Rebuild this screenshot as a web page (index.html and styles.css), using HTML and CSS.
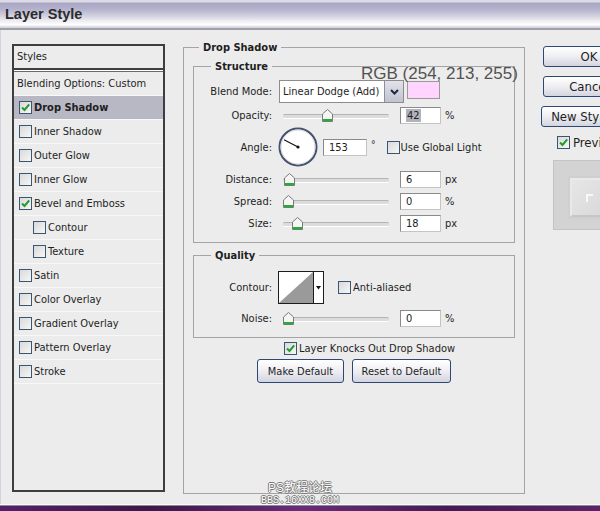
FILE: index.html
```html
<!DOCTYPE html>
<html>
<head>
<meta charset="utf-8">
<title>Layer Style</title>
<link rel="stylesheet" href="styles.css">
</head>
<body>
<div class="window">
  <header class="titlebar"><span class="title">Layer Style</span></header>

  <div class="main">
    <aside class="stylelist">
      <div class="styles-hdr">Styles</div>
      <div class="hdr-sep"></div>
      <div class="item plain">Blending Options: Custom</div>
      <div class="item sel"><span class="cb"><svg viewBox="0 0 11 11" width="11" height="11"><path d="M2 5.5 L4.5 8 L9.2 2.3" fill="none" stroke="#1f9b2a" stroke-width="2"/></svg></span><b>Drop Shadow</b></div>
      <div class="item"><span class="cb"></span>Inner Shadow</div>
      <div class="item"><span class="cb"></span>Outer Glow</div>
      <div class="item"><span class="cb"></span>Inner Glow</div>
      <div class="item"><span class="cb"><svg viewBox="0 0 11 11" width="11" height="11"><path d="M2 5.5 L4.5 8 L9.2 2.3" fill="none" stroke="#1f9b2a" stroke-width="2"/></svg></span>Bevel and Emboss</div>
      <div class="item sub"><span class="cb"></span>Contour</div>
      <div class="item sub"><span class="cb"></span>Texture</div>
      <div class="item"><span class="cb"></span>Satin</div>
      <div class="item"><span class="cb"></span>Color Overlay</div>
      <div class="item"><span class="cb"></span>Gradient Overlay</div>
      <div class="item"><span class="cb"></span>Pattern Overlay</div>
      <div class="item"><span class="cb"></span>Stroke</div>
    </aside>

    <section class="panel">
      <fieldset class="grp outer">
        <legend>Drop Shadow</legend>

        <fieldset class="grp structure">
          <legend>Structure</legend>
          <div class="rows srows">
            <div class="row blend">
              <span class="lbl">Blend Mode:</span>
              <div class="select">
                <span class="sel-text">Linear Dodge (Add)</span>
                <span class="sel-btn"><svg viewBox="0 0 9 6" width="9" height="6"><path d="M1 1 L4.5 4.5 L8 1" fill="none" stroke="#1b2846" stroke-width="2"/></svg></span>
              </div>
              <span class="swatch"></span>
            </div>

            <div class="row srow r-opacity">
              <span class="lbl">Opacity:</span>
              <div class="slider"><span class="thumb" style="left:39px"><svg viewBox="0 0 11 13" width="11" height="13"><path d="M0.5 5 L5.5 0.5 L10.5 5 V12.5 H0.5 Z" fill="#f5f5f5" stroke="#7a7a7a"/><rect x="1" y="10" width="9" height="2.5" fill="#2ea83a"/></svg></span></div>
              <span class="num"><span class="hl">42</span></span>
              <span class="unit">%</span>
            </div>

            <div class="row angle">
              <span class="lbl">Angle:</span>
              <svg class="dial" viewBox="0 0 40 40" width="40" height="40">
                <circle cx="20" cy="20" r="18.5" fill="#fff" stroke="#45526e" stroke-width="2"/>
                <circle cx="20" cy="20" r="17" fill="none" stroke="#d6d6de" stroke-width="1"/>
                <line x1="20" y1="20" x2="6" y2="12.8" stroke="#111" stroke-width="1.2"/>
                <circle cx="20" cy="20" r="1.6" fill="#111"/>
              </svg>
              <span class="num ang">153</span>
              <span class="deg">°</span>
              <span class="cb glob"></span>
              <span class="cbtext">Use Global Light</span>
            </div>

            <div class="row srow r-dist">
              <span class="lbl">Distance:</span>
              <div class="slider"><span class="thumb" style="left:1px"><svg viewBox="0 0 11 13" width="11" height="13"><path d="M0.5 5 L5.5 0.5 L10.5 5 V12.5 H0.5 Z" fill="#f5f5f5" stroke="#7a7a7a"/><rect x="1" y="10" width="9" height="2.5" fill="#2ea83a"/></svg></span></div>
              <span class="num">6</span>
              <span class="unit">px</span>
            </div>

            <div class="row srow r-spread">
              <span class="lbl">Spread:</span>
              <div class="slider"><span class="thumb" style="left:0px"><svg viewBox="0 0 11 13" width="11" height="13"><path d="M0.5 5 L5.5 0.5 L10.5 5 V12.5 H0.5 Z" fill="#f5f5f5" stroke="#7a7a7a"/><rect x="1" y="10" width="9" height="2.5" fill="#2ea83a"/></svg></span></div>
              <span class="num">0</span>
              <span class="unit">%</span>
            </div>

            <div class="row srow r-size">
              <span class="lbl">Size:</span>
              <div class="slider"><span class="thumb" style="left:9px"><svg viewBox="0 0 11 13" width="11" height="13"><path d="M0.5 5 L5.5 0.5 L10.5 5 V12.5 H0.5 Z" fill="#f5f5f5" stroke="#7a7a7a"/><rect x="1" y="10" width="9" height="2.5" fill="#2ea83a"/></svg></span></div>
              <span class="num">18</span>
              <span class="unit">px</span>
            </div>
          </div>
        </fieldset>

        <fieldset class="grp quality">
          <legend>Quality</legend>
          <div class="rows qrows">
            <div class="row contour-row">
              <span class="lbl">Contour:</span>
              <div class="contour">
                <svg viewBox="0 0 34 31" width="34" height="31" class="curve"><rect width="34" height="31" fill="#fff"/><path d="M0 31 L34 0 L34 31 Z" fill="#9a9a9a"/></svg>
                <span class="c-btn"><svg viewBox="0 0 5 4" width="5" height="4"><path d="M0 0 H5 L2.5 3.5 Z" fill="#111"/></svg></span>
              </div>
              <span class="cb anti"></span>
              <span class="cbtext">Anti-aliased</span>
            </div>
            <div class="row srow r-noise">
              <span class="lbl">Noise:</span>
              <div class="slider"><span class="thumb" style="left:0px"><svg viewBox="0 0 11 13" width="11" height="13"><path d="M0.5 5 L5.5 0.5 L10.5 5 V12.5 H0.5 Z" fill="#f5f5f5" stroke="#7a7a7a"/><rect x="1" y="10" width="9" height="2.5" fill="#2ea83a"/></svg></span></div>
              <span class="num">0</span>
              <span class="unit">%</span>
            </div>
          </div>
        </fieldset>

        <div class="knock"><span class="cb"><svg viewBox="0 0 11 11" width="11" height="11"><path d="M2 5.5 L4.5 8 L9.2 2.3" fill="none" stroke="#1f9b2a" stroke-width="2"/></svg></span><span class="cbtext">Layer Knocks Out Drop Shadow</span></div>

        <div class="defaults">
          <div class="btn mk">Make Default</div>
          <div class="btn rs">Reset to Default</div>
        </div>
      </fieldset>
    </section>

    <aside class="side">
      <div class="btn big">OK</div>
      <div class="btn big">Cancel</div>
      <div class="btn big newstyle">New Style...</div>
      <div class="pv-check"><span class="cb"><svg viewBox="0 0 11 11" width="11" height="11"><path d="M2 5.5 L4.5 8 L9.2 2.3" fill="none" stroke="#1f9b2a" stroke-width="2"/></svg></span><span class="pv-text">Preview</span></div>
      <div class="preview">
        <div class="pv-inner"><svg viewBox="0 0 10 10" width="10" height="10"><path d="M2 9 V2 H8" fill="none" stroke="#ffffff" stroke-width="1.6"/></svg></div>
      </div>
    </aside>
  </div>

  <div class="bottom"></div>

  <div class="rgb-note">RGB (254, 213, 255)</div>
  <div class="watermark">
    <span class="wm1">PS教程论坛</span>
    <span class="wm2">BBS.16XX8.COM</span>
  </div>
</div>
</body>
</html>
```

FILE: styles.css
```css
* { box-sizing: border-box; }
html, body { margin: 0; padding: 0; }
body {
  width: 600px;
  height: 511px;
  overflow: hidden;
  background: #ececec;
  font-family: "DejaVu Sans Condensed", "Liberation Sans", sans-serif;
  font-size: 11px;
  color: #1e1e1e;
}
.window {
  position: relative;
  display: grid;
  grid-template-rows: 30px 474px 7px;
  height: 511px;
  box-shadow: inset 1px 0 0 #d4d3e0;
}

/* title bar */
.titlebar {
  display: flex;
  align-items: center;
  padding-left: 5px;
  background: linear-gradient(to bottom, #dcdbe5 0, #dcdbe5 2px, #a8a6c4 3px, #b3b1cc 9px, #d2d1df 16px, #eeeef3 21px, #fbfbfd 24px, #ffffff 25px, #d6d6de 27px, #d6d6de 28px);
  border-bottom: 2px solid #a09ea9;
}
.title {
  font-family: "Liberation Sans", Arial, sans-serif;
  font-weight: bold;
  font-size: 14.5px;
  color: #2b2b2b;
}

/* main area */
.main {
  display: flex;
  align-items: flex-start;
  padding: 11px 0 0 12px;
  overflow: hidden;
}

/* style list */
.stylelist {
  flex-shrink: 0;
  width: 153px;
  height: 448px;
  margin-top: 3px;
  border: 2px solid #3e3e3e;
  background: #ececec;
}
.styles-hdr {
  height: 24px;
  line-height: 22px;
  padding-left: 3px;
  border-bottom: 2px solid #3e3e3e;
}
.hdr-sep {
  height: 2px;
  border-top: 1px solid #ffffff;
  border-bottom: 1px solid #6a6a6a;
}
.item {
  display: flex;
  align-items: center;
  height: 24px;
  padding-left: 5px;
  border-bottom: 1px solid #f8f8f8;
  white-space: nowrap;
}
.item.plain { padding-left: 3px; }
.item.sub { padding-left: 19px; }
.item.sel { background: #b8b7c4; }
.item .cb { margin-right: 2px; }

/* checkbox */
.cb {
  flex-shrink: 0;
  display: inline-flex;
  align-items: center;
  justify-content: center;
  width: 13px;
  height: 13px;
  border: 1px solid #3a5670;
  background: linear-gradient(135deg, #d9d9dc, #f6f6f6);
}
.cb svg { display: block; }
.cbtext { white-space: nowrap; }

/* fieldsets */
.panel { flex-shrink: 0; margin-left: 18px; }
.grp {
  margin: 0;
  padding: 0;
  min-width: 0;
  border: 1px solid #a4a4a4;
}
.grp > legend {
  font-weight: bold;
  line-height: 13px;
  padding: 0 4px;
  margin-left: 15px;
}
.outer {
  width: 342px;
  height: 453px;
}
.structure, .quality {
  margin: 6px 9px 0 9px;
}
.structure > legend, .quality > legend { margin-left: 17px; }

.rows { display: flex; flex-direction: column; }
.srows { padding: 7px 0 10px; }
.qrows { padding: 9px 0 10px; }

.row { display: flex; align-items: center; }
.lbl {
  flex-shrink: 0;
  width: 78px;
  text-align: right;
  white-space: nowrap;
}
.blend { height: 23px; }
.r-opacity { margin-top: 4px; }
.angle { height: 40px; margin-top: 3px; }
.r-dist { margin-top: 4px; }
.r-spread, .r-size { margin-top: 5px; }
.srow { height: 17px; }
.r-noise { margin-top: 6px; }

/* select */
.select {
  display: flex;
  margin-left: 7px;
  width: 125px;
  height: 23px;
  border: 1px solid #8c8c8c;
  background: #fff;
}
.sel-text {
  flex: 1;
  padding-left: 3px;
  line-height: 21px;
  white-space: nowrap;
}
.sel-btn {
  width: 19px;
  display: flex;
  align-items: center;
  justify-content: center;
  border-left: 1px solid #8e8ea2;
  background: linear-gradient(#e2e2ea, #c2c2d0);
}
.swatch {
  margin-left: 3px;
  width: 33px;
  height: 18px;
  margin-top: -3px;
  border: 1px solid #9a9a9a;
  background: #ffd5ff;
}

/* slider */
.slider {
  position: relative;
  flex-shrink: 0;
  width: 106px;
  height: 17px;
  margin-left: 11px;
}
.slider::before {
  content: "";
  position: absolute;
  left: 0;
  right: 0;
  top: 7px;
  height: 3px;
  border-top: 1px solid #b4b4b4;
  border-bottom: 1px solid #ffffff;
  background: #dcdcdc;
  border-radius: 2px;
}
.thumb {
  position: absolute;
  top: 2px;
  width: 11px;
  height: 13px;
}
.thumb svg { display: block; }

/* numeric fields */
.num {
  flex-shrink: 0;
  width: 41px;
  height: 17px;
  margin-left: 11px;
  padding-left: 5px;
  line-height: 15px;
  background: #fff;
  border: 1px solid #8a8a8a;
  border-right-color: #c4c4c4;
  border-bottom-color: #c4c4c4;
}
.hl { background: #b2b2bc; padding: 0 1px; }
.unit { margin-left: 4px; }

.dial { flex-shrink: 0; margin-left: 6px; display: block; }
.num.ang { width: 44px; margin-left: 5px; }
.deg { margin-left: 4px; font-size: 10px; align-self: flex-start; margin-top: 12px; }
.glob { margin-left: 11px; margin-right: 1px; }

/* contour */
.contour {
  display: flex;
  margin-left: 6px;
  width: 46px;
  height: 33px;
  border: 1px solid #1c1c1c;
  background: #fff;
}
.curve { display: block; }
.c-btn {
  flex: 1;
  display: flex;
  align-items: center;
  justify-content: center;
  border-left: 1px solid #1c1c1c;
}
.anti { margin-left: 14px; margin-right: 2px; }

/* knock-out + buttons */
.knock {
  display: flex;
  align-items: center;
  margin-top: 4px;
  padding-left: 100px;
  height: 13px;
}
.knock .cb { margin-right: 2px; }
.defaults {
  display: flex;
  justify-content: center;
  gap: 8px;
  margin-top: 4px;
}
.btn {
  display: flex;
  align-items: center;
  justify-content: center;
  height: 24px;
  border: 1px solid #2e4874;
  border-radius: 3px;
  background: linear-gradient(#ffffff, #f0f0f4 45%, #d4d4e0);
  color: #1e1e1e;
  white-space: nowrap;
}
.btn.mk { width: 87px; }
.btn.rs { width: 99px; }

/* right column */
.side {
  flex-shrink: 0;
  width: 100px;
  margin-left: 18px;
  padding-top: 5px;
  display: flex;
  flex-direction: column;
  align-items: flex-start;
}
.btn.big {
  width: 92px;
  height: 21px;
  font-size: 13px;
  margin-bottom: 9px;
}
.btn.newstyle { width: 90px; margin-left: -2px; }
.pv-check {
  display: flex;
  align-items: center;
  padding-left: 14px;
  height: 13px;
  font-size: 13px;
}
.pv-check .cb { margin-right: 3px; }
.preview {
  margin-top: 11px;
  margin-left: 10px;
  width: 90px;
  height: 70px;
  padding: 17px 0 0 16px;
  background: #d3d3d3;
  border: 1px solid #c4c4c4;
}
.pv-inner {
  width: 40px;
  height: 39px;
  display: flex;
  align-items: center;
  justify-content: center;
  background: linear-gradient(135deg, #e6e6e6, #d8d8d8);
  border: 2px solid #e9e9e9;
  border-right-color: #c6c6c6;
  border-bottom-color: #c6c6c6;
  box-shadow: 0 0 0 2px #cfcfcf;
}

/* bottom frame */
.bottom {
  border-top: 1px solid #fbfbfb;
  box-shadow: inset 0 1px 0 #8c8a96;
  background: linear-gradient(90deg, #55206a, #3c1848 25%, #6a2c7a 50%, #451a52 75%, #5c2468);
}

/* overlays */
.rgb-note {
  position: absolute;
  left: 361px;
  top: 65px;
  font-family: "Liberation Sans", Arial, sans-serif;
  font-size: 17px;
  line-height: 17px;
  color: #525252;
  white-space: nowrap;
}
.watermark {
  position: absolute;
  left: 258px;
  top: 482px;
  display: flex;
  flex-direction: column;
  align-items: center;
  width: 84px;
  color: #ffffff;
  text-shadow: 1px 0 0 #7a7a7a, -1px 0 0 #7a7a7a, 0 1px 0 #7a7a7a, 0 -1px 0 #7a7a7a;
}
.wm1 {
  font-family: "Liberation Sans", "Noto Sans CJK SC", sans-serif;
  font-size: 12px;
  line-height: 13px;
}
.wm2 {
  font-family: "Liberation Mono", monospace;
  font-size: 10px;
  line-height: 11px;
}
```
